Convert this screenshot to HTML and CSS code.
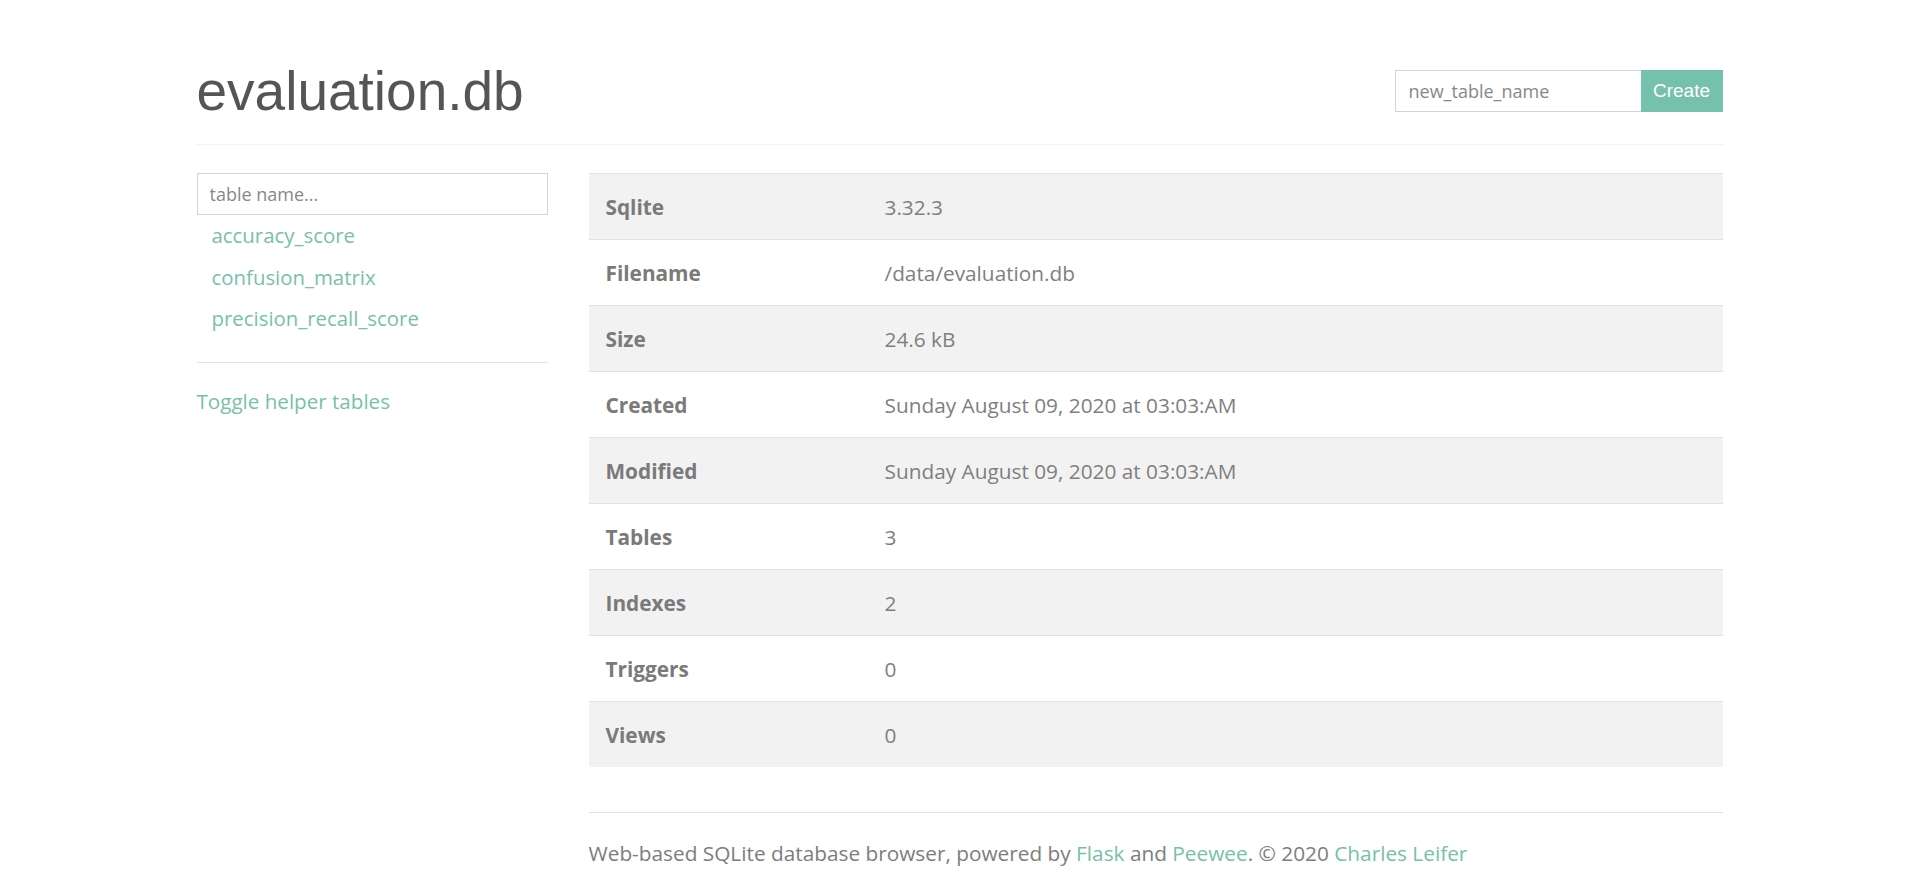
FILE: index.html
```html
<!DOCTYPE html>
<html lang="en">
<head>
<meta charset="utf-8">
<title>evaluation.db</title>
<link rel="stylesheet" href="styles.css">
</head>
<body>
<div class="container">
  <header class="page-header">
    <h1 class="title">evaluation.db</h1>
    <form class="create-form">
      <input class="create-input" type="text" placeholder="new_table_name">
      <button class="create-btn" type="button">Create</button>
    </form>
  </header>
  <div class="row">
    <aside class="sidebar">
      <input class="search-input" type="text" placeholder="table name...">
      <ul class="table-list">
        <li><a href="#" class="table-link">accuracy_score</a></li>
        <li><a href="#" class="table-link">confusion_matrix</a></li>
        <li><a href="#" class="table-link">precision_recall_score</a></li>
      </ul>
      <hr class="side-rule">
      <a href="#" class="toggle-link">Toggle helper tables</a>
    </aside>
    <main class="content">
      <table class="info-table">
        <tbody>
          <tr><th>Sqlite</th><td>3.32.3</td></tr>
          <tr><th>Filename</th><td>/data/evaluation.db</td></tr>
          <tr><th>Size</th><td>24.6 kB</td></tr>
          <tr><th>Created</th><td>Sunday August 09, 2020 at 03:03:AM</td></tr>
          <tr><th>Modified</th><td>Sunday August 09, 2020 at 03:03:AM</td></tr>
          <tr><th>Tables</th><td>3</td></tr>
          <tr><th>Indexes</th><td>2</td></tr>
          <tr><th>Triggers</th><td>0</td></tr>
          <tr><th>Views</th><td>0</td></tr>
        </tbody>
      </table>
      <footer class="footer">
        <hr class="foot-rule">
        <p class="foot-text">Web-based SQLite database browser, powered by <a href="#">Flask</a> and <a href="#">Peewee</a>. &copy; 2020 <a href="#">Charles Leifer</a></p>
      </footer>
    </main>
  </div>
</div>
</body>
</html>
```

FILE: styles.css
```css
html, body {
  margin: 0;
  padding: 0;
  background: #fff;
}
body {
  font-family: "Open Sans", "Noto Sans", sans-serif;
  font-size: 20.8px;
  color: #7d7d7d;
}
a {
  color: #76c1aa;
  text-decoration: none;
}
.container {
  width: 1526px;
  margin: 0 auto;
}
.page-header {
  display: flex;
  align-items: center;
  justify-content: space-between;
  padding: 58px 0 20px;
  border-bottom: 1px solid #f3f3f3;
}
.title {
  margin: 0;
  font-family: "Liberation Sans", Arial, sans-serif;
  font-weight: 400;
  font-size: 55px;
  line-height: 66px;
  color: #555;
}
.create-form {
  display: flex;
  margin: 0;
}
.create-input {
  box-sizing: border-box;
  width: 246px;
  height: 42px;
  border: 1px solid #ced4da;
  border-right: none;
  padding: 0 13px;
  font-family: "Open Sans", sans-serif;
  font-size: 18px;
  color: #555;
  outline: none;
}
.create-input::placeholder,
.search-input::placeholder {
  color: #888;
}
.create-btn {
  box-sizing: border-box;
  width: 82px;
  height: 42px;
  border: none;
  background: #76c1ab;
  color: #fff;
  font-family: "Liberation Sans", Arial, sans-serif;
  font-size: 19px;
  padding: 0;
}
.row {
  display: flex;
  gap: 41px;
  margin-top: 28px;
  align-items: flex-start;
}
.sidebar {
  width: 351px;
  flex: none;
}
.search-input {
  box-sizing: border-box;
  width: 351px;
  height: 42px;
  border: 1px solid #ced4da;
  padding: 0 12px;
  font-family: "Open Sans", sans-serif;
  font-size: 18px;
  display: block;
  outline: none;
}
.table-list {
  list-style: none;
  margin: 0;
  padding: 0;
}
.table-link {
  display: block;
  padding: 6px 15px;
  line-height: 29.5px;
  font-size: 20.4px;
}
.side-rule {
  border: none;
  border-top: 1px solid #e3e3e3;
  margin: 22px 0 23px;
}
.toggle-link {
  display: block;
  line-height: 30px;
  font-size: 20.6px;
}
.content {
  flex: 1;
  min-width: 0;
}
.info-table {
  width: 100%;
  border-collapse: collapse;
}
.info-table th,
.info-table td {
  text-align: left;
  padding: 19px 17px 17px;
  line-height: 29px;
  border-top: 1px solid #e3e3e3;
  vertical-align: middle;
}
.info-table th {
  width: 245px;
  font-weight: 700;
  color: #7a7a7a;
}
.info-table td {
  color: #7f7f7f;
}
.info-table tr:nth-child(odd) {
  background: #f2f2f2;
}
.footer {
  margin-top: 45px;
}
.foot-rule {
  border: none;
  border-top: 1px solid #e3e3e3;
  margin: 0 0 25px;
}
.foot-text {
  margin: 0;
  line-height: 30px;
}
```
